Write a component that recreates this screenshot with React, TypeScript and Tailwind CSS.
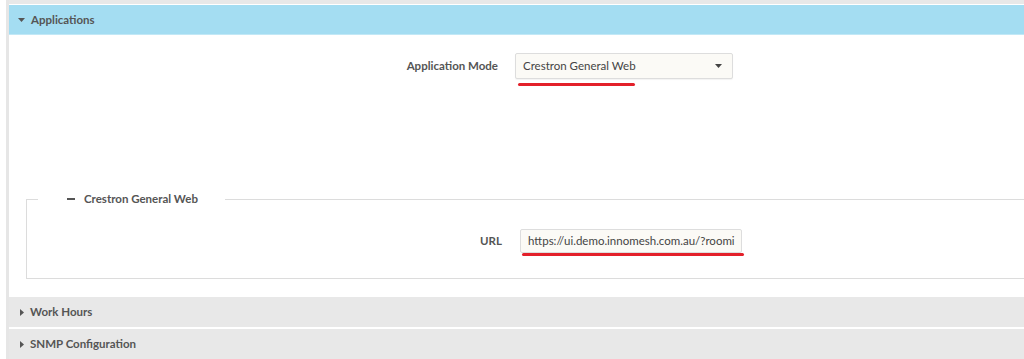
import React from "react";

const CaretDown = ({ className }: { className?: string }) => (
  <svg className={className} width="7" height="4" viewBox="0 0 7 4">
    <path d="M0 0 H7 L3.5 4 Z" fill="currentColor" />
  </svg>
);

const CaretRight = () => (
  <svg width="4" height="7" viewBox="0 0 4 7" className="text-[#555]">
    <path d="M0 0 V7 L4 3.5 Z" fill="currentColor" />
  </svg>
);

const CollapsedSection = ({ title }: { title: string }) => (
  <div className="h-[30px] bg-[#e8e8e8] flex items-center pl-[11px] gap-[6px]">
    <CaretRight />
    <span className="text-[11.5px] font-bold text-[#555]">{title}</span>
  </div>
);

const App = () => {
  return (
    <div
      className="w-[1024px] h-[359px] overflow-hidden bg-white flex"
      style={{ fontFamily: "Lato, 'Open Sans', sans-serif" }}
    >
      <div className="w-[6px] shrink-0" />
      <div className="flex-1 border-l-[3px] border-[#e6e6e6] flex flex-col">
        <div className="h-[4px] bg-[#e8e8e8]" />
        <header className="mt-[1px] h-[30px] bg-[#a4ddf2] border-b border-[#c2e8f6] flex items-center pl-[9px] gap-[6px]">
          <CaretDown className="text-[#555]" />
          <span className="text-[11.5px] font-bold text-[#555]">Applications</span>
        </header>

        <div className="mt-[18px] flex items-center h-[26px]">
          <label className="w-[489px] text-right text-[11.5px] font-bold text-[#555]">Application Mode</label>
          <div className="relative ml-[17px] w-[218px] h-[26px] bg-[#fbfaf6] border border-[#ddd] rounded-[2px] flex items-center justify-between pl-[7px] pr-[10px] shadow-[0_1px_1px_rgba(0,0,0,0.05)]">
            <span className="text-[11.5px] text-[#444]">Crestron General Web</span>
            <CaretDown className="text-[#444]" />
            <div className="absolute left-[2px] top-[29px] w-[117px] h-[3px] rounded-full bg-[#e3202a]" />
          </div>
        </div>

        <fieldset className="mt-[112px] ml-[17px] mr-[-40px] border-l border-t border-b border-[#dcdcdc] h-[88px]">
          <legend className="ml-[11px] pl-[29px] pr-[27px] leading-[16px] text-[11.5px] font-bold text-[#555] flex items-center">
            <span className="inline-block w-[8px] h-[2px] bg-[#555] mr-[9px]" />
            Crestron General Web
          </legend>
          <div className="mt-[22px] flex items-center h-[24px]">
            <label className="w-[475px] text-right text-[11.5px] font-bold text-[#555]">URL</label>
            <div className="relative ml-[18px] w-[222px] h-[24px] bg-[#fbfaf6] border border-[#ddd] rounded-[2px] flex items-center pl-[7px] overflow-visible">
              <span className="text-[11.5px] text-[#444] whitespace-nowrap overflow-hidden">https://ui.demo.innomesh.com.au/?roomi</span>
              <div className="absolute left-[1px] top-[23px] w-[222px] h-[3px] rounded-full bg-[#e3202a]" />
            </div>
          </div>
        </fieldset>

        <div className="mt-[18px] flex flex-col gap-[2px]">
          <CollapsedSection title="Work Hours" />
          <CollapsedSection title="SNMP Configuration" />
        </div>
      </div>
    </div>
  );
};

export default App;
